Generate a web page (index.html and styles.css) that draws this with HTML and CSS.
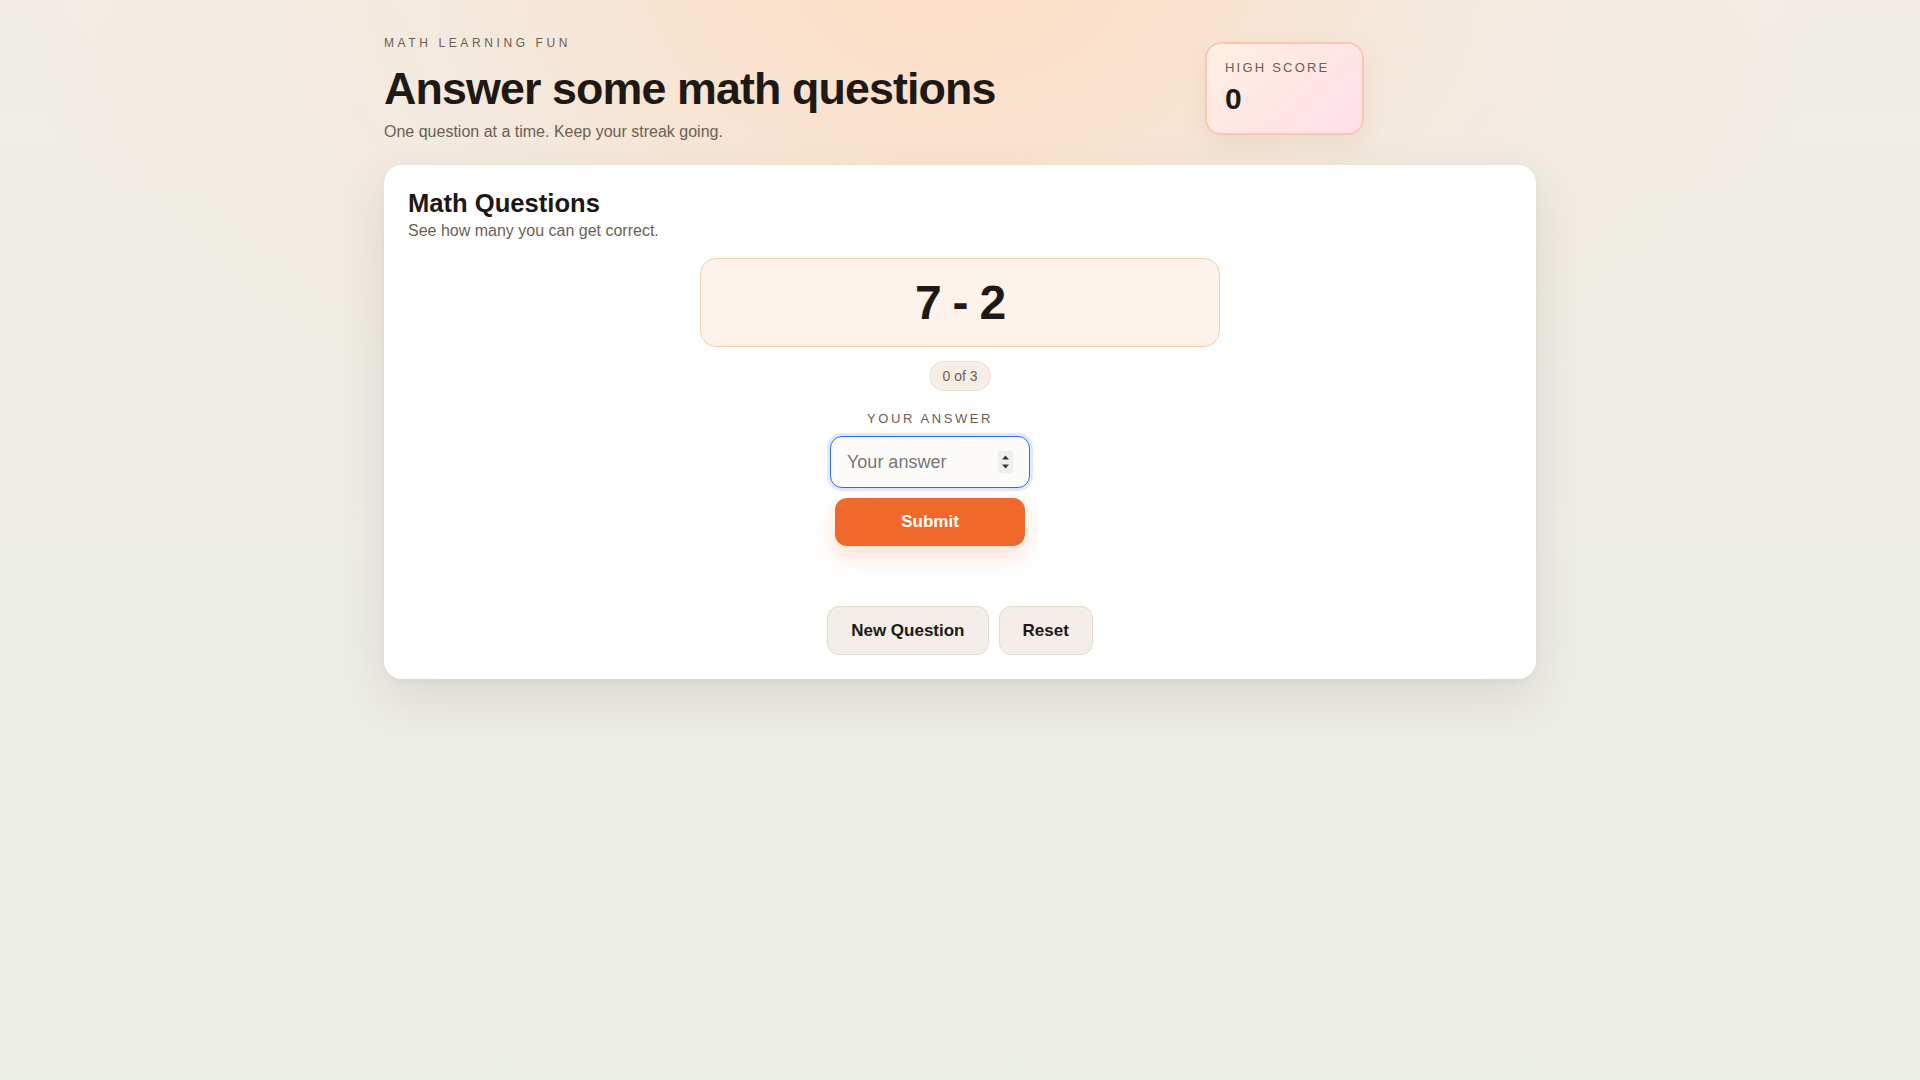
FILE: index.html
```html
<!DOCTYPE html>
<html lang="en">
<head>
<meta charset="utf-8">
<title>Math Learning Fun</title>
<link rel="stylesheet" href="styles.css">
</head>
<body>
<div class="page">
  <header class="hero">
    <div class="hero-text">
      <p class="eyebrow">MATH LEARNING FUN</p>
      <h1 class="hero-title">Answer some math questions</h1>
      <p class="hero-sub">One question at a time. Keep your streak going.</p>
    </div>
    <div class="stat">
      <div class="stat-label">HIGH SCORE</div>
      <div class="stat-value">0</div>
    </div>
  </header>

  <main class="card">
    <h2 class="card-title">Math Questions</h2>
    <p class="card-sub">See how many you can get correct.</p>

    <div class="question">7 - 2</div>
    <div class="progress-row"><span class="pill">0 of 3</span></div>

    <div class="answer-row">
      <form class="answer-form" onsubmit="return false;">
        <label class="answer-label" for="answer">YOUR ANSWER</label>
        <div class="field">
          <input id="answer" class="field-input" type="number" placeholder="Your answer">
          <span class="spinner" aria-hidden="true">
            <svg width="15" height="22" viewBox="0 0 15 22">
              <rect x="0" y="0" width="15" height="22" fill="#efefef"/>
              <polygon points="4,8.5 11,8.5 7.5,4.5" fill="#3a3a3a"/>
              <polygon points="4,13.5 11,13.5 7.5,17.5" fill="#3a3a3a"/>
            </svg>
          </span>
        </div>
        <button class="btn-primary" type="submit">Submit</button>
      </form>
      <div class="feedback"></div>
    </div>

    <div class="actions">
      <button class="btn-secondary btn-new" type="button">New Question</button>
      <button class="btn-secondary btn-reset" type="button">Reset</button>
    </div>
  </main>
</div>
</body>
</html>
```

FILE: styles.css
```css
* { box-sizing: border-box; }

html, body {
  margin: 0;
  min-height: 100%;
}

body {
  font-family: "Liberation Sans", Arial, sans-serif;
  color: #1f1a16;
  min-height: 1080px;
  background:
    radial-gradient(ellipse 520px 380px at 50% -40px, rgba(253, 222, 196, 0.95), rgba(253, 222, 196, 0) 100%),
    radial-gradient(ellipse 900px 520px at 48% 0%, rgba(248, 228, 210, 0.85), rgba(248, 228, 210, 0) 100%),
    linear-gradient(180deg, #f1ede6 0%, #eeede7 50%, #eceee8 100%);
}

.page {
  width: 1152px;
  margin: 0 auto;
  padding-top: 36px;
}

/* Header */
.hero {
  max-width: 980px;
  display: flex;
  justify-content: space-between;
  align-items: center;
}

.eyebrow {
  margin: 0;
  font-size: 12px;
  line-height: 14px;
  letter-spacing: 0.3em;
  color: #6b5d52;
}

.hero-title {
  margin: 14px 0 0;
  font-size: 44.8px;
  line-height: 1.1;
  font-weight: 700;
  letter-spacing: -0.02em;
  color: #1e1915;
}

.hero-sub {
  margin: 10px 0 0;
  font-size: 16px;
  line-height: 18px;
  color: #6b5f54;
}

.stat {
  min-width: 159px;
  padding: 16px 18px 17px;
  border: 2px solid #f8c7b2;
  border-radius: 16px;
  background: linear-gradient(135deg, #fff0e2 0%, #ffe6e6 55%, #ffe0ea 100%);
  box-shadow: 0 10px 24px rgba(120, 80, 50, 0.08);
}

.stat-label {
  font-size: 13px;
  line-height: 15px;
  letter-spacing: 0.17em;
  color: #6b5d52;
}

.stat-value {
  margin-top: 7px;
  font-size: 30px;
  line-height: 34px;
  font-weight: 700;
  color: #1e1915;
}

/* Card */
.card {
  margin-top: 24px;
  padding: 24px;
  background: #ffffff;
  border-radius: 18px;
  box-shadow: 0 20px 50px rgba(70, 55, 35, 0.12), 0 2px 6px rgba(70, 55, 35, 0.04);
}

.card-title {
  margin: 0;
  font-size: 25.6px;
  line-height: 1.1;
  font-weight: 700;
  color: #1c1814;
}

.card-sub {
  margin: 5px 0 0;
  font-size: 16px;
  line-height: 18px;
  color: #6b5f54;
}

.question {
  width: 520px;
  margin: 18px auto 0;
  padding: 15px;
  border: 1px solid #f7cbab;
  border-radius: 16px;
  background: #fdf3ea;
  text-align: center;
  font-size: 48px;
  line-height: 57px;
  font-weight: 700;
  letter-spacing: -0.025em;
  color: #1e1915;
}

.progress-row {
  margin-top: 14px;
  display: flex;
  justify-content: center;
}

.pill {
  display: inline-block;
  height: 30px;
  padding: 6px 12px;
  border: 1px solid #ebe0d3;
  border-radius: 999px;
  background: #f6eee6;
  font-size: 14px;
  line-height: 16px;
  color: #6b5d52;
}

.answer-row {
  margin-top: 20px;
  display: flex;
  justify-content: center;
  gap: 16px;
}

.answer-form {
  width: 200px;
  display: flex;
  flex-direction: column;
  align-items: center;
  margin: 0;
}

.feedback {
  width: 44px;
}

.answer-label {
  font-size: 13px;
  line-height: 15px;
  letter-spacing: 0.2em;
  color: #6b5d52;
}

.field {
  margin-top: 10px;
  width: 200px;
  height: 52px;
  display: flex;
  align-items: center;
  padding: 0 16px 0 13px;
  border: 1px solid #2f6cf3;
  border-radius: 12px;
  background: #fdfbf8;
  box-shadow: 0 0 0 3px rgba(60, 110, 240, 0.16);
}

.field-input {
  flex: 1;
  min-width: 0;
  height: 100%;
  padding: 0 0 0 3px;
  border: 0;
  outline: none;
  background: transparent;
  font-family: "Liberation Sans", Arial, sans-serif;
  font-size: 18px;
  color: #1e1915;
  -moz-appearance: textfield;
}

.field-input::placeholder {
  color: #767676;
}

.field-input::-webkit-inner-spin-button,
.field-input::-webkit-outer-spin-button {
  -webkit-appearance: none;
  margin: 0;
}

.spinner {
  display: flex;
  width: 15px;
  height: 22px;
}

.btn-primary {
  margin-top: 10px;
  width: 190px;
  height: 48px;
  border: 0;
  border-radius: 12px;
  background: #f0692b;
  color: #ffffff;
  font-family: "Liberation Sans", Arial, sans-serif;
  font-size: 17px;
  font-weight: 700;
  box-shadow: 0 10px 22px rgba(240, 105, 43, 0.22);
  cursor: pointer;
}

.actions {
  margin-top: 60px;
  display: flex;
  justify-content: center;
  gap: 10px;
}

.btn-secondary {
  height: 49px;
  padding: 0 23px;
  border: 1px solid #e4dacd;
  border-radius: 12px;
  background: #f3eee8;
  color: #1e1915;
  font-family: "Liberation Sans", Arial, sans-serif;
  font-size: 17px;
  font-weight: 700;
  cursor: pointer;
}
```
